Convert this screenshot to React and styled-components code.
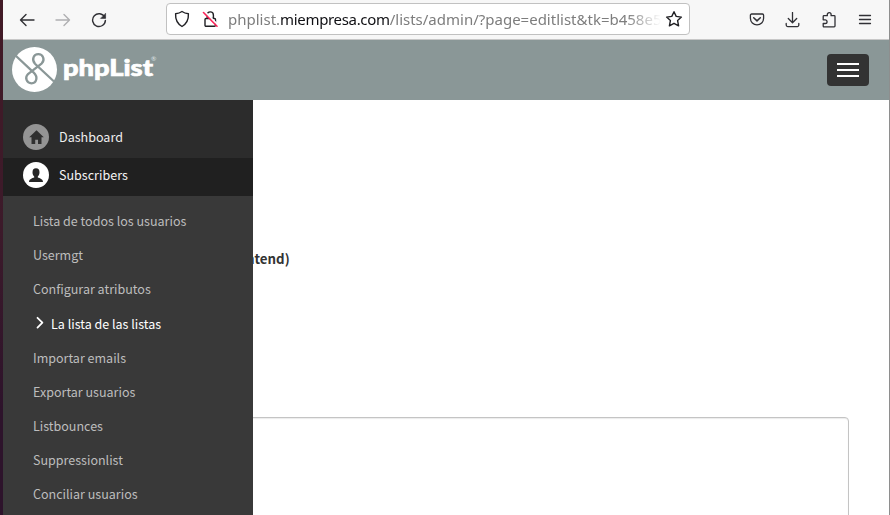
import React from 'react';
import styled, { createGlobalStyle } from 'styled-components';

const Global = createGlobalStyle`
  * { box-sizing: border-box; }
  body { margin: 0; background: #fff; overflow: hidden; }
`;

const sans = '"Noto Sans CJK SC", "Noto Sans", sans-serif';

const Window = styled.div`
  display: flex;
  flex-direction: column;
  width: 890px;
  height: 515px;
  overflow: hidden;
  border-style: solid;
  border-width: 0 0 0 3px;
  border-image: linear-gradient(#421a26, #3c1a2a 45%, #2d132b 80%) 1;
  box-shadow: inset -1px 0 #8e8e8e;
  background: #fff;
`;
const Toolbar = styled.header`
  display: flex;
  align-items: center;
  flex: 0 0 40px;
  width: 886px;
  background: #f7f7f7;
  border-bottom: 1px solid #c8c8c8;
`;
const NavGroup = styled.div`
  display: flex;
  align-items: center;
  gap: 20px;
  width: 163px;
  padding-left: 16px;
`;
const Icon = styled.svg`
  display: block;
  flex: none;
  fill: none;
  stroke: ${p => p.$color || '#303035'};
  stroke-width: ${p => p.$weight || 1.3};
  stroke-linecap: round;
  stroke-linejoin: round;
`;
const AddressBar = styled.div`
  display: flex;
  align-items: center;
  width: 524px;
  height: 32px;
  margin-top: -1px;
  padding: 0 6px 0 7px;
  border: 1px solid #c1c1c1;
  border-radius: 4px;
  background: #fff;
`;
const SiteIcons = styled.div`
  display: flex;
  gap: 12px;
`;
const Url = styled.div`
  flex: 1;
  min-width: 0;
  margin-left: 10px;
  overflow: hidden;
  white-space: nowrap;
  font: 15px/22px "Noto Sans", sans-serif;
  color: #7d7d7d;
  mask-image: linear-gradient(to right, #000 calc(100% - 38px), transparent calc(100% - 4px));
`;
const Domain = styled.span`
  color: #101014;
  letter-spacing: -0.33px;
`;
const Actions = styled.div`
  display: flex;
  align-items: center;
  gap: 20px;
  margin-left: 59px;
`;
const Banner = styled.div`
  display: flex;
  align-items: center;
  justify-content: space-between;
  flex: 0 0 60px;
  width: 886px;
  padding: 0 20px 0 9px;
  background: #8a9797;
`;
const Logo = styled.svg`
  display: block;
  font-family: Lato, sans-serif;
`;
const MenuButton = styled.button`
  display: flex;
  flex-direction: column;
  justify-content: center;
  gap: 4px;
  width: 42px;
  height: 32px;
  padding: 0 10px;
  border: 0;
  border-radius: 4px;
  background: #333;
`;
const MenuBar = styled.span`
  height: 2px;
  background: #fff;
`;
const Body = styled.div`
  display: flex;
  flex: 1;
  min-height: 0;
`;
const Sidebar = styled.nav`
  flex: 0 0 250px;
  padding-top: 20px;
  background: #2c2c2c;
  font-family: ${sans};
`;
const Section = styled.div`
  display: flex;
  align-items: center;
  gap: 10px;
  height: 38px;
  padding: 0 20px 4px;
  font-size: 12.55px;
  line-height: 20px;
  color: ${p => (p.$active ? '#f4f4f4' : '#eee')};
  background: ${p => (p.$active ? '#202020' : 'transparent')};
`;
const Badge = styled.span`
  display: flex;
  align-items: center;
  justify-content: center;
  width: 26px;
  height: 26px;
  border-radius: 50%;
  background: ${p => (p.$active ? '#fff' : '#949494')};
`;
const Submenu = styled.div`
  height: 330px;
  padding: 8px 0 0 30px;
  background: #393939;
`;
const Item = styled.div`
  display: flex;
  align-items: center;
  gap: 6px;
  height: ${p => (p.$active ? 35 : 34)}px;
  padding-top: ${p => (p.$active ? 1 : 0)}px;
  font-size: 12.53px;
  line-height: 20px;
  white-space: nowrap;
  color: ${p => (p.$active ? '#fff' : '#bdbdbd')};
`;
const Main = styled.main`
  flex: 1;
  overflow: hidden;
`;
const Label = styled.div`
  height: 317px;
  padding-top: 149px;
  margin-left: -7px;
  font: bold 13.3px/20px ${sans};
  color: #333;
`;
const TextBox = styled.div`
  width: 606px;
  height: 140px;
  margin-left: -10px;
  border: 1px solid #c4c4c4;
  border-radius: 4px;
  box-shadow: inset 0 1px 1px rgba(0, 0, 0, 0.08);
`;

const items = [
  'Lista de todos los usuarios', 'Usermgt', 'Configurar atributos', 'La lista de las listas',
  'Importar emails', 'Exportar usuarios', 'Listbounces', 'Suppressionlist', 'Conciliar usuarios',
];

export default function App() {
  return (
    <>
      <Global />
      <Window>
        <Toolbar>
          <NavGroup>
            <Icon width="16" height="16" $weight="1.4"><path d="M15 8H1.5M7 2.5 1.5 8 7 13.5" /></Icon>
            <Icon width="16" height="16" $color="#b0b0b2" $weight="1.4"><path d="M1 8h13.5M9 2.5 14.5 8 9 13.5" /></Icon>
            <Icon width="16" height="16" $weight="1.4">
              <path d="M13.7 5.2A6.4 6.4 0 1 0 14.4 8.4" />
              <path d="M14.6 1.6v4.8H9.8z" fill="#303035" strokeWidth=".6" />
            </Icon>
          </NavGroup>
          <AddressBar>
            <SiteIcons>
              <Icon width="16" height="18" $color="#202024" $weight="1.4">
                <path d="M8 1.5C10 2.9 12 3.5 14.4 3.8 14.7 9.5 12.8 13.7 8 16.5 3.2 13.7 1.3 9.5 1.6 3.8 4 3.5 6 2.9 8 1.5z" />
              </Icon>
              <Icon width="16" height="18" $color="#202024" $weight="1.4">
                <path d="M3 9.500a1 1 0 0 1 1-1h8.500a1 1 0 0 1 1 1v5.800a1 1 0 0 1-1 1H4a1 1 0 0 1-1-1zM5.200 8.500V5a3.100 3.100 0 0 1 6.200 0v3.500" />
                <path d="M2.500 1.500 16 15" stroke="#fff" strokeWidth="1.800" />
                <path d="M1.500 2.500 15 16.200" stroke="#fb2358" strokeWidth="1.600" />
              </Icon>
            </SiteIcons>
            <Url>phplist.<Domain>miempresa.com</Domain>/lists/admin/?page=editlist&amp;tk=b458e5</Url>
            <Icon width="18" height="18" $color="#202024" $weight="1.4">
              <path d="m9 1.7 2.2 4.7 5.2.7-3.800 3.500 1 5.200L9 13.300l-4.600 2.500 1-5.200L1.600 7.100l5.200-.7z" />
            </Icon>
          </AddressBar>
          <Actions>
            <Icon width="16" height="16">
              <path d="M2.600 2h10.800a1.200 1.200 0 0 1 1.200 1.200v3.100a6.600 6.600 0 0 1-13.200 0V3.200A1.200 1.200 0 0 1 2.600 2z" />
              <path d="m4.700 5.800 3.300 3.100 3.300-3.100" strokeWidth="1.500" />
            </Icon>
            <Icon width="16" height="16"><path d="M7.500.5v10M3.300 6.500l4.200 4.200 4.200-4.200M1.200 11.500v1.600a1.500 1.500 0 0 0 1.500 1.500h9.600a1.500 1.500 0 0 0 1.500-1.500v-1.600" /></Icon>
            <Icon width="16" height="16">
              <path d="M2.200 6V4.500a.8.800 0 0 1 .8-.8h3.300V2.600a1.900 1.900 0 0 1 3.800 0v1.100h3.100a.8.800 0 0 1 .8.800v9.600a.8.800 0 0 1-.8.800H3a.8.800 0 0 1-.8-.8v-2.600h2a1.800 1.800 0 0 0 0-3.700h-2z" />
            </Icon>
            <Icon width="16" height="16"><path d="M2.500 3.500h11M2.500 7.500h11M2.500 11.500h11" /></Icon>
          </Actions>
        </Toolbar>
        <Banner>
          <Logo width="150" height="48" viewBox="0 0 150 48">
            <circle cx="22.500" cy="23.500" r="22.500" fill="#fff" />
            <path
              fill="none"
              stroke="#8a9797"
              strokeWidth="2.300"
              d="M3.500 9.500 21.500 26.300C26.500 31 24.500 37.300 19.500 37.300S12.500 31.500 16 28L29.800 17.300C33.300 13.500 31 8.200 26.300 8.200S19.300 13.500 23 17.800L42 35.500"
            />
            <text x="51" y="30.200" fill="#fff" stroke="#fff" strokeWidth=".7" fontSize="23.500" fontWeight="900" textLength="90" lengthAdjust="spacingAndGlyphs">phpList</text>
            <text x="139" y="15.300" fill="#dfe4e4" fontSize="6.500">®</text>
          </Logo>
          <MenuButton aria-label="Menu"><MenuBar /><MenuBar /><MenuBar /></MenuButton>
        </Banner>
        <Body>
          <Sidebar>
            <Section>
              <Badge>
                <svg width="16" height="16" viewBox="0 0 16 16"><path fill="#303030" d="M8.500 1.200 15.800 8.200H13.500v6.800H10v-4.300H7.200v4.300H3.500V8.200H1.200z" /></svg>
              </Badge>
              Dashboard
            </Section>
            <Section $active>
              <Badge $active>
                <svg width="16" height="16" viewBox="0 0 16 16"><path fill="#252525" d="M8 1.300c2.400 0 3.500 1.600 3.500 4 0 2-.7 3.300-1.700 4.300v1c2 .8 5.200 1.500 5.200 4.400H1c0-2.900 3.200-3.600 5.200-4.400v-1C5.200 8.600 4.500 7.300 4.500 5.300c0-2.400 1.100-4 3.500-4z" /></svg>
              </Badge>
              Subscribers
            </Section>
            <Submenu>
              {items.map((t, i) => (
                <Item key={t} $active={i === 3}>
                  {i === 3 && <Icon width="12" height="16" $color="#fff" $weight="1.8"><path d="m4.500 1.800 4.900 4.900-4.900 4.900" /></Icon>}
                  {t}
                </Item>
              ))}
            </Submenu>
          </Sidebar>
          <Main>
            <Label>ntend)</Label>
            <TextBox />
          </Main>
        </Body>
      </Window>
    </>
  );
}
